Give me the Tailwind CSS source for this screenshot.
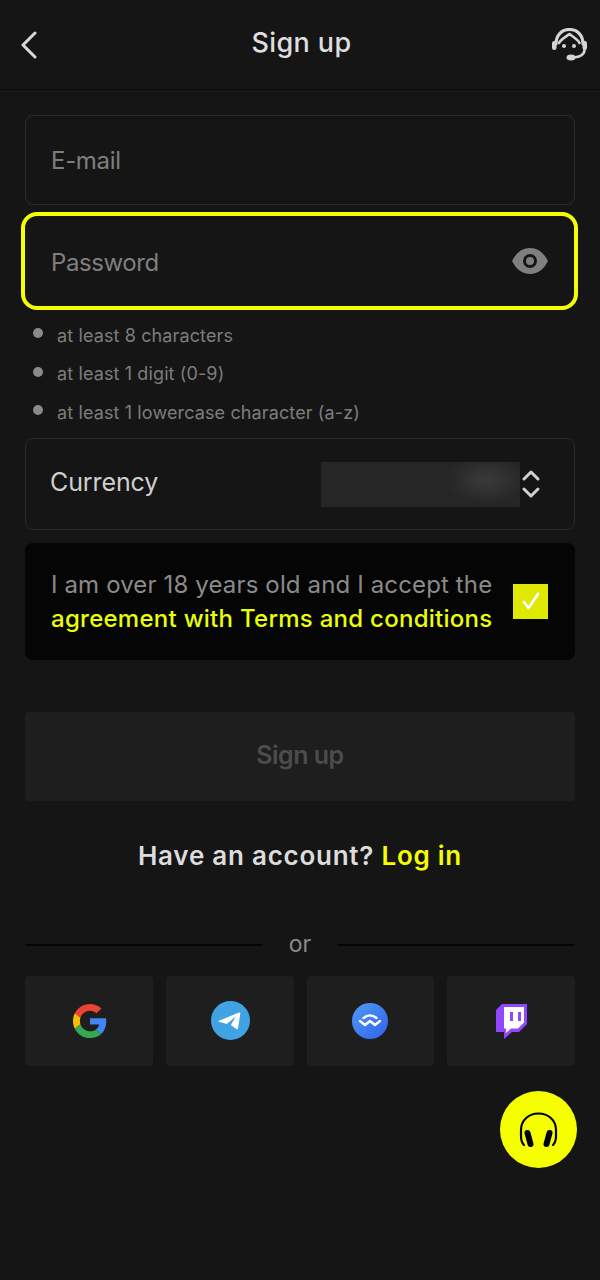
<!DOCTYPE html>
<html lang="en">
<head>
  <meta charset="UTF-8">
  <title>Sign up</title>
  <script src="https://cdn.jsdelivr.net/npm/@tailwindcss/browser@4"></script>
</head>
<body class="bg-[#151515] font-['Inter',sans-serif] text-[#dcdcdc]">
  <div class="relative w-[600px] h-[1280px] overflow-hidden">
    <header class="h-[90px] border-b border-[#0b0b0b] grid grid-cols-3 items-center pl-[20px] pr-[13px] pb-[2px]">
      <svg class="mt-[2px]" width="18" height="28" viewBox="0 0 18 28" fill="none" stroke="#d8d8d8" stroke-width="3" stroke-linecap="round" stroke-linejoin="round"><path d="M15 2 3 14l12 12"/></svg>
      <h1 class="text-center -ml-[4px] text-[27px] font-medium tracking-[0.4px] text-[#dedede] whitespace-nowrap">Sign up</h1>
      <svg class="mt-[2px] justify-self-end" width="35" height="33" viewBox="0 0 35 33" fill="none" stroke="#d4d4d4" stroke-width="3.2" stroke-linecap="round" stroke-linejoin="round">
        <path d="M4 16C4 7 10 1.500 17.500 1.500S31 7 31 16"/>
        <path d="M7 15c1-3 5-5 10.500-9 5 4 9 6 10 9" stroke-width="2.6"/>
        <rect x="0" y="13" width="4.500" height="9" rx="2.200" fill="#d4d4d4" stroke="none"/>
        <rect x="30.500" y="13" width="4.500" height="9" rx="2.200" fill="#d4d4d4" stroke="none"/>
        <circle cx="12" cy="18" r="2" fill="#d4d4d4" stroke="none"/>
        <circle cx="22" cy="18" r="2" fill="#d4d4d4" stroke="none"/>
        <path d="M32.500 22c0 4-4 7-11 7.500" stroke-width="2.6"/>
        <ellipse cx="19" cy="29.500" rx="4.500" ry="3" fill="#d4d4d4" stroke="none"/>
      </svg>
    </header>

    <main class="px-[25px] pt-[25px]">
      <div class="h-[90px] border border-[#2a2a2a] rounded-[8px] flex items-center pl-[25px] pt-[2px] text-[24px] tracking-[-0.3px] text-[#7f7f7f]">E-mail</div>

      <div class="-ml-[4px] -mr-[3px] mt-[7px] h-[98px] border-[4px] border-[#f5ff00] rounded-[16px] flex items-center justify-between pl-[26px] pr-[26px] pt-[3px] text-[24px] tracking-[-0.4px] text-[#7f7f7f]">
        <span>Password</span>
        <svg class="-mt-[3px]" width="36" height="26" viewBox="0 0 36 26"><path fill="#7f7f7f" fill-rule="evenodd" d="M18 0c8 0 14 5 18 13-4 8-10 13-18 13S4 21 0 13C4 5 10 0 18 0Zm0 6a7 7 0 1 0 0 14 7 7 0 0 0 0-14Zm0 3a4 4 0 1 1 0 8 4 4 0 0 1 0-8Z"/></svg>
      </div>

      <ul class="mt-[6px] flex flex-col text-[18px] tracking-[0.12px] text-[#7d7d7d]">
        <li class="h-[38.5px] flex items-center gap-[14px] pl-[8px]"><span class="w-[10px] h-[10px] rounded-full bg-[#8a8a8a] -mt-[4px]"></span><span>at least 8 characters</span></li>
        <li class="h-[38.5px] flex items-center gap-[14px] pl-[8px]"><span class="w-[10px] h-[10px] rounded-full bg-[#8a8a8a] -mt-[4px]"></span><span>at least 1 digit (0-9)</span></li>
        <li class="h-[38.5px] flex items-center gap-[14px] pl-[8px]"><span class="w-[10px] h-[10px] rounded-full bg-[#8a8a8a] -mt-[4px]"></span><span>at least 1 lowercase character (a-z)</span></li>
      </ul>

      <div class="mt-[6px] h-[92px] border border-[#2a2a2a] rounded-[8px] flex items-center pl-[24px] pr-[33px]">
        <span class="text-[25px] tracking-[-0.1px] text-[#cfcfcf] -mt-[2px]">Currency</span>
        <div class="ml-auto mt-[2px] w-[199px] h-[45px] bg-[radial-gradient(ellipse_40px_24px_at_165px_18px,#3a3a3a,#262626)]"></div>
        <svg class="ml-[1px]" width="20" height="30" viewBox="0 0 20 30" fill="none" stroke="#d0d0d0" stroke-width="3" stroke-linecap="round" stroke-linejoin="round"><path d="M3 10l7-7 7 7M3 20l7 7 7-7"/></svg>
      </div>

      <div class="mt-[13px] h-[117px] bg-[#050505] rounded-[8px] flex items-center justify-between pl-[26px] pr-[27px]">
        <p class="pt-[2px] text-[24px] leading-[34px] tracking-[0.14px] text-[#8a8a8a] whitespace-nowrap">I am over 18 years old and I accept the<br><span class="text-[#eaff00] font-medium tracking-[0.27px]">agreement with Terms and conditions</span></p>
        <span class="w-[35px] h-[35px] bg-[#dfe800] flex items-center justify-center shrink-0">
          <svg width="20" height="20" viewBox="0 0 20 20" fill="none" stroke="#fff" stroke-width="2.800" stroke-linecap="round" stroke-linejoin="round"><path d="M3 11l4.500 6L17 3"/></svg>
        </span>
      </div>

      <button class="mt-[52px] w-full h-[89px] bg-[#1e1e1e] rounded-[4px] text-[25px] font-semibold tracking-[-0.5px] text-[#4c4c4c]">Sign up</button>

      <p class="mt-[37px] h-[35px] leading-[35px] text-center text-[26px] font-semibold tracking-[0.75px] text-[#dcdcdc]">Have an account? <span class="text-[#f5ff00]">Log in</span></p>

      <div class="mt-[54px] h-[36px] flex items-center gap-[26px]">
        <span class="flex-1 h-[2px] bg-[#050505]"></span>
        <span class="text-[23px] text-[#8a8a8a]">or</span>
        <span class="flex-1 h-[2px] bg-[#050505]"></span>
      </div>

      <div class="mt-[13px] grid grid-cols-4 gap-[13px]">
        <div class="h-[90px] bg-[#1e1e1e] rounded-[4px] flex items-center justify-center">
          <svg class="ml-[2px]" width="34" height="34" viewBox="0 0 48 48"><path fill="#EA4335" d="M24 9.500c3.540 0 6.710 1.220 9.210 3.600l6.850-6.850C35.900 2.380 30.470 0 24 0 14.620 0 6.510 5.380 2.560 13.220l7.980 6.190C12.430 13.720 17.740 9.500 24 9.500z"/><path fill="#4285F4" d="M46.980 24.550c0-1.570-.15-3.090-.38-4.550H24v9.020h12.940c-.58 2.960-2.260 5.480-4.780 7.180l7.730 6c4.510-4.180 7.090-10.360 7.090-17.650z"/><path fill="#FBBC05" d="M10.530 28.590c-.48-1.450-.76-2.990-.76-4.590s.27-3.140.76-4.590l-7.980-6.190C.92 16.460 0 20.120 0 24c0 3.880.92 7.540 2.560 10.780l7.970-6.190z"/><path fill="#34A853" d="M24 48c6.480 0 11.930-2.130 15.890-5.810l-7.730-6c-2.150 1.450-4.920 2.300-8.160 2.300-6.260 0-11.570-4.220-13.470-9.910l-7.980 6.190C6.510 42.620 14.620 48 24 48z"/></svg>
        </div>
        <div class="h-[90px] bg-[#1e1e1e] rounded-[4px] flex items-center justify-center">
          <svg class="ml-[1px]" width="39" height="39" viewBox="0 0 39 39"><circle cx="19.500" cy="19.500" r="19.500" fill="#40a3e3"/><path fill="#fff" d="M7.500 20 28 11.500c.8-.3 1.500.2 1.300 1.200L27 27.500c-.1.800-1 1.100-1.700.6l-5.500-4 5-8.500-9 7.500-7.800-2.300c-.9-.3-.9-.9-.5-1.300Z"/></svg>
        </div>
        <div class="h-[90px] bg-[#1e1e1e] rounded-[4px] flex items-center justify-center">
          <svg width="36" height="36" viewBox="0 0 36 36"><defs><linearGradient id="wc" x1="0" y1="0" x2="1" y2="1"><stop offset="0" stop-color="#4f9bf8"/><stop offset="1" stop-color="#2f62ea"/></linearGradient></defs><circle cx="18" cy="18" r="18" fill="url(#wc)"/><path fill="none" stroke="#fff" stroke-width="2.400" stroke-linecap="round" stroke-linejoin="round" d="M8 18l5 4 5-4 5 4 5-4M11.500 15c4-3.500 9-3.500 13 0"/></svg>
        </div>
        <div class="h-[90px] bg-[#1e1e1e] rounded-[4px] flex items-center justify-center">
          <svg width="32" height="36" viewBox="0 0 32 36"><path fill="#9146ff" d="M7 1h25v20L24 29h-7l-8 7v-7H1V7Z"/><path fill="#fff" d="M9 4h20v15.500L23 25.500h-7l-5 4.500v-4.500H9Z"/><path fill="#9146ff" d="M15 9h3v9h-3zM23 9h3v9h-3z"/></svg>
        </div>
      </div>
    </main>

    <div class="absolute left-[500px] top-[1091px] w-[77px] h-[77px] rounded-full bg-[#f5ff00] flex items-center justify-center">
      <svg width="39" height="36" viewBox="0 0 39 36" fill="none" stroke="#000" stroke-linecap="round">
        <path stroke-width="2.200" d="M2 24V18C2 8 10 1.500 19.500 1.500S37 8 37 18v6"/>
        <path stroke-width="6" d="M8.500 21l3 11M30.500 21l-3 11"/>
        <path stroke-width="2.200" d="M2 24c0 4 1 7 3 9M37 24c0 4-1 7-3 9"/>
      </svg>
    </div>
  </div>
</body>
</html>
